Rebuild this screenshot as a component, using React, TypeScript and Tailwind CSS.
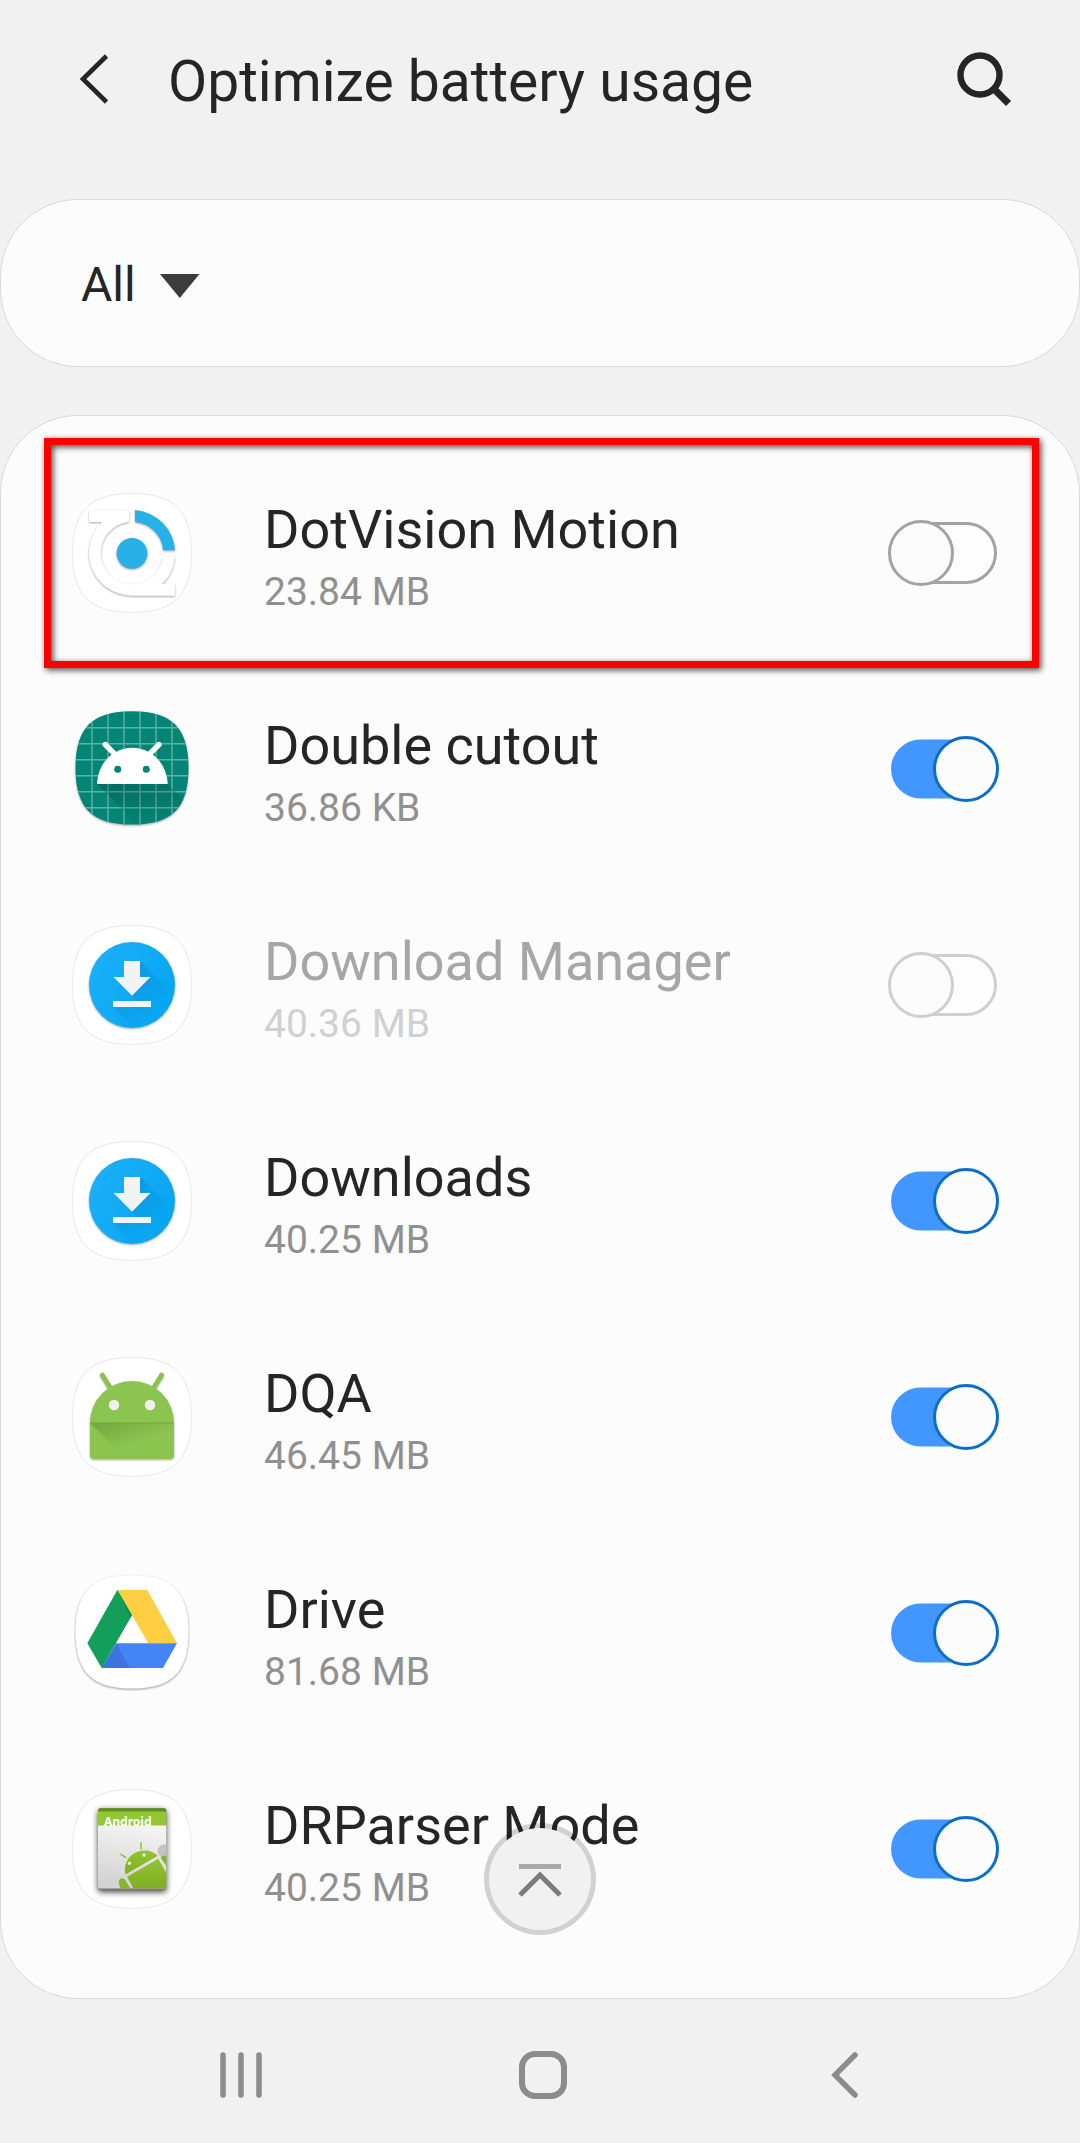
import { useState } from "react";
import type { ReactNode } from "react";

/* The launcher's squircle mask: hairline outline for legacy icons. */
function Plate({ children }: { children: ReactNode }) {
  return (
    <svg viewBox="0 0 120 120" className="size-[120px] flex-none" aria-hidden>
      <path
        d="M60 .5C102 .5 119.5 18 119.5 60S102 119.5 60 119.5 .5 102 .5 60 18 .5 60 .5Z"
        fill="#fff"
        stroke="#e9e9e9"
      />
      {children}
    </svg>
  );
}

const ADAPTIVE =
  "M60 2.3C100 2.3 116.5 19 116.5 59S100 115.6 60 115.6 3.5 99 3.5 59 20 2.3 60 2.3Z";

function DotVisionIcon() {
  return (
    <Plate>
      <g className="[filter:drop-shadow(0_1px_1px_rgba(0,0,0,0.35))]">
        <path
          d="M17 17.3H57V28.9A31.3 31.3 0 1 0 91.2 63.7H103A43 43 0 0 1 90 91H103V102.7H60A43 43 0 0 1 30 28.9H17Z"
          fill="#fff"
        />
        <path d="M63 17.1A43 43 0 0 1 103 57.3H91.2A31.3 31.3 0 0 0 63 28.9Z" fill="#27b1e6" />
        <circle cx="60" cy="60.3" r="15.4" fill="#27b1e6" />
      </g>
    </Plate>
  );
}

function CutoutIcon() {
  return (
    <svg viewBox="0 0 120 120" className="size-[120px] flex-none" aria-hidden>
      <defs>
        <clipPath id="cutout-mask">
          <path d={ADAPTIVE} />
        </clipPath>
        <linearGradient id="cutout-shade" x1="0.1" y1="0" x2="0.5" y2="1">
          <stop offset="0" stopColor="#00352c" stopOpacity="0.28" />
          <stop offset="1" stopColor="#00352c" stopOpacity="0" />
        </linearGradient>
      </defs>
      <path
        d={ADAPTIVE}
        fill="#028575"
        className="[filter:drop-shadow(0_1px_1px_rgba(0,0,0,0.35))]"
      />
      <g clipPath="url(#cutout-mask)">
        <path
          d="M20 0V120M36 0V120M52 0V120M68 0V120M84 0V120M100 0V120M0 18.7H120M0 34.7H120M0 50.7H120M0 66.7H120M0 82.7H120M0 98.7H120"
          stroke="#5fb2a7"
          strokeWidth="1.4"
        />
        <path d="M25 75H95.7L120 98V120H70Z" fill="url(#cutout-shade)" />
      </g>
      <path
        d="M33.3 35.6L43 45.4M86.9 35.6L77.2 45.4"
        stroke="#fff"
        strokeWidth="5.6"
        strokeLinecap="round"
      />
      <path d="M25 75C26 54 41 38.7 60.2 38.7S94.6 54 95.7 75Z" fill="#fff" />
      <circle cx="45.7" cy="60.3" r="3.5" fill="#028575" />
      <circle cx="74.3" cy="60.3" r="3.5" fill="#028575" />
    </svg>
  );
}

function DownloadIcon({ id }: { id: string }) {
  const disc = `${id}-disc`;
  const shade = `${id}-shade`;
  const clip = `${id}-clip`;
  return (
    <Plate>
      <defs>
        <linearGradient id={disc} x1="0" y1="0" x2="1" y2="0.6">
          <stop offset="0" stopColor="#1eb0f8" />
          <stop offset="1" stopColor="#06a6f3" />
        </linearGradient>
        <linearGradient id={shade} x1="0.2" y1="0.2" x2="0.7" y2="0.7">
          <stop offset="0" stopColor="#02629b" stopOpacity="0.26" />
          <stop offset="1" stopColor="#02629b" stopOpacity="0" />
        </linearGradient>
        <clipPath id={clip}>
          <circle cx="60" cy="60" r="43" />
        </clipPath>
      </defs>
      <circle
        cx="60"
        cy="60"
        r="43"
        fill={`url(#${disc})`}
        className="[filter:drop-shadow(0_1px_1px_rgba(0,0,0,0.35))]"
      />
      <g clipPath={`url(#${clip})`}>
        <path d="M68 36L108 76L85 98L60 70.7L68 52ZM41 82H79L98 101H60Z" fill={`url(#${shade})`} />
      </g>
      <path d="M52 36H68V52H78.5L60 70.7L41.5 52H52ZM41 76H79V82H41Z" fill="#f1f3f4" />
    </Plate>
  );
}

function DqaIcon() {
  return (
    <Plate>
      <defs>
        <linearGradient id="dqa-shade" x1="0" y1="0" x2="0.5" y2="0.6">
          <stop offset="0" stopColor="#3f6f1c" stopOpacity="0.35" />
          <stop offset="1" stopColor="#3f6f1c" stopOpacity="0" />
        </linearGradient>
      </defs>
      <g className="[filter:drop-shadow(0_1px_1px_rgba(0,0,0,0.35))]">
        <path
          d="M30.3 18L39 32M89.7 18L81 32"
          stroke="#8bc34a"
          strokeWidth="4.6"
          strokeLinecap="round"
        />
        <path
          d="M18 66A42 42 0 0 1 102 66V98Q102 102 98 102H22Q18 102 18 98Z"
          fill="#8cc450"
        />
      </g>
      <path d="M18 66H102L96 102H54Z" fill="url(#dqa-shade)" />
      <path d="M18 66H102" stroke="#74a83c" />
      <circle cx="42" cy="48" r="5.2" fill="#f1f1f1" />
      <circle cx="78" cy="48" r="5.2" fill="#f1f1f1" />
    </Plate>
  );
}

function DriveIcon() {
  return (
    <svg viewBox="0 0 120 120" className="size-[120px] flex-none" aria-hidden>
      <path
        d={ADAPTIVE}
        fill="#fff"
        className="[filter:drop-shadow(0_1px_1px_rgba(0,0,0,0.4))]"
      />
      <path d="M45.3 17H75.3L105 70.3H76.3Z" fill="#ffcf43" />
      <path d="M44.3 70.3H105L91 95H29.7Z" fill="#4385f5" />
      <path d="M44.3 70.3L58 95H29.7Z" fill="#3c75e2" />
      <path d="M45.3 17L60 42.3L29.7 95L15.3 70.3Z" fill="#119f5a" />
      <path d="M45.3 17L60 42.3L58.5 45Z" fill="#0e8f50" />
    </svg>
  );
}

function DrParserIcon() {
  return (
    <Plate>
      <defs>
        <linearGradient id="parser-page" x1="0.6" y1="0" x2="0.4" y2="1">
          <stop offset="0" stopColor="#f4f4f4" />
          <stop offset="1" stopColor="#d2d2d2" />
        </linearGradient>
        <linearGradient id="parser-bot" x1="0" y1="0" x2="0" y2="1">
          <stop offset="0" stopColor="#93c52f" />
          <stop offset="1" stopColor="#80ad26" />
        </linearGradient>
        <clipPath id="parser-clip">
          <rect x="26" y="19.3" width="68.3" height="81.2" rx="2.5" />
        </clipPath>
      </defs>
      <rect
        x="26"
        y="19.3"
        width="68.3"
        height="81.7"
        rx="2.5"
        fill="#777"
        className="[filter:drop-shadow(0_2px_3px_rgba(0,0,0,0.75))]"
      />
      <g clipPath="url(#parser-clip)">
        <path d="M26 36H95V99.5H26Z" fill="url(#parser-page)" />
        <path d="M26 19H95V23H26Z" fill="#5f8f1c" />
        <path d="M26 22.5H95V36.5H26Z" fill="#93c832" />
        <text
          x="32"
          y="37"
          fill="#fff"
          className="font-['Noto_Sans',sans-serif] text-[12px] font-bold"
        >
          Android
        </text>
        <circle cx="92" cy="62" r="6.5" fill="#c2c2c2" />
        <path
          d="M69 53.7V60M49 65.3L53.5 68.3"
          stroke="#8fbf2e"
          strokeWidth="1.5"
          strokeLinecap="round"
        />
        <path d="M53.4 85.5A19.5 19.5 0 0 1 85.8 66.8Z" fill="url(#parser-bot)" />
        <circle cx="57.5" cy="74.3" r="1.7" fill="#f0f5e2" />
        <circle cx="72" cy="66" r="1.7" fill="#f0f5e2" />
        <path d="M55 87.800L86.3 69.7L95 85V99.5H61.5Z" fill="url(#parser-bot)" />
        <path d="M88.5 68.5Q92 65 95 68V78Z" fill="#86b52a" />
        <path d="M46.5 93Q48 87.5 52.5 90L58.5 99.5H48.5Z" fill="#86b52a" />
      </g>
    </Plate>
  );
}

function Switch({
  id,
  checked,
  disabled,
  onChange,
}: {
  id: string;
  checked: boolean;
  disabled?: boolean;
  onChange: (on: boolean) => void;
}) {
  return (
    <span className="relative h-[68px] w-28 flex-none">
      <input
        id={id}
        type="checkbox"
        role="switch"
        checked={checked}
        disabled={disabled}
        onChange={(e) => onChange(e.target.checked)}
        className="absolute inset-0 size-full cursor-pointer appearance-none rounded-full disabled:cursor-default"
      />
      <svg
        viewBox="0 0 112 68"
        className={`pointer-events-none absolute inset-0 size-full ${disabled ? "text-[#cfcfcf]" : "text-[#a3a3a3]"}`}
        aria-hidden
      >
        {checked ? (
          <>
            <rect x="3" y="4.5" width="106" height="59" rx="29.5" fill="#4297ff" />
            <circle cx="78" cy="34" r="31.5" fill="#fcfcfc" stroke="#0a6fc8" strokeWidth="3" />
          </>
        ) : (
          <>
            <rect
              x="4"
              y="4.5"
              width="103.5"
              height="59"
              rx="29.5"
              fill="#fdfdfd"
              stroke="currentColor"
              strokeWidth="3"
            />
            <circle cx="33" cy="34" r="31.5" fill="#fcfcfc" stroke="currentColor" strokeWidth="3" />
          </>
        )}
      </svg>
    </span>
  );
}

type AppRow = {
  id: string;
  name: string;
  size: string;
  icon: ReactNode;
  on: boolean;
  disabled?: boolean;
  highlighted?: boolean;
};

const apps: AppRow[] = [
  {
    id: "dotvision",
    name: "DotVision Motion",
    size: "23.84 MB",
    icon: <DotVisionIcon />,
    on: false,
    highlighted: true,
  },
  { id: "cutout", name: "Double cutout", size: "36.86 KB", icon: <CutoutIcon />, on: true },
  {
    id: "download-manager",
    name: "Download Manager",
    size: "40.36 MB",
    icon: <DownloadIcon id="dm" />,
    on: false,
    disabled: true,
  },
  {
    id: "downloads",
    name: "Downloads",
    size: "40.25 MB",
    icon: <DownloadIcon id="dl" />,
    on: true,
  },
  { id: "dqa", name: "DQA", size: "46.45 MB", icon: <DqaIcon />, on: true },
  { id: "drive", name: "Drive", size: "81.68 MB", icon: <DriveIcon />, on: true },
  { id: "drparser", name: "DRParser Mode", size: "40.25 MB", icon: <DrParserIcon />, on: true },
];

export default function App() {
  const [enabled, setEnabled] = useState<Record<string, boolean>>(
    Object.fromEntries(apps.map((a) => [a.id, a.on])),
  );

  return (
    <div className="flex min-h-screen flex-col bg-[#f1f1f1] font-[Roboto,sans-serif] text-[#252525]">
      <header className="flex h-[160px] items-center pr-[67px] pl-[76px]">
        <button type="button" aria-label="Back" className="flex-none">
          <svg viewBox="0 0 36 60" className="h-[60px] w-9" fill="none">
            <path d="M30.5 6L7 29L30.5 52" stroke="currentColor" strokeWidth="4.6" />
          </svg>
        </button>
        <h1 className="ml-14 flex-1 pt-[3px] text-[57px] leading-[72px]">
          Optimize battery usage
        </h1>
        <button type="button" aria-label="Search" className="flex-none">
          <svg viewBox="0 0 60 60" className="size-[60px]" fill="none">
            <circle cx="27" cy="25" r="19.5" stroke="currentColor" strokeWidth="6.4" />
            <path d="M40.5 38.5L55.5 53.5" stroke="currentColor" strokeWidth="7" />
          </svg>
        </button>
      </header>

      <section className="mt-[39px] flex h-[168px] items-center rounded-[78px] border border-[#d9d9d9] bg-[#fcfcfc] pt-1">
        <select
          aria-label="Filter apps"
          defaultValue="all"
          className="h-20 appearance-none bg-transparent pr-6 pl-20 text-[48px] [field-sizing:content]"
        >
          <option value="all">All</option>
          <option value="not-optimized">Apps not optimized</option>
        </select>
        <svg viewBox="0 0 40 26" className="pointer-events-none h-[26px] w-10" aria-hidden>
          <path d="M0 2H39.5L19.8 26Z" fill="#3c3c3c" />
        </svg>
      </section>

      <main className="relative mt-12 rounded-[78px] border border-[#d9d9d9] bg-[#fcfcfc] pt-[29px] pb-[41px]">
        <ul>
          {apps.map((app) => (
            <li key={app.id} className="relative flex h-[216px] items-center pr-[79px] pl-[71px]">
              {app.icon}
              <label
                htmlFor={app.id}
                className={`ml-[72px] min-w-0 flex-1 pt-1.5 ${app.disabled ? "text-[#a6a6a6]" : ""}`}
              >
                <span className="block text-[54px] leading-[72px]">{app.name}</span>
                <span
                  className={`block text-[39px] leading-[52px] ${app.disabled ? "text-[#d0d0d0]" : "text-[#909090]"}`}
                >
                  {app.size}
                </span>
              </label>
              <Switch
                id={app.id}
                checked={enabled[app.id]}
                disabled={app.disabled}
                onChange={(on) => setEnabled((prev) => ({ ...prev, [app.id]: on }))}
              />
              {app.highlighted && (
                <span className="pointer-events-none absolute -inset-y-[7px] right-10 left-[43px] border-[7px] border-[#ff0000] [filter:drop-shadow(2px_2px_3px_rgba(0,0,0,0.75))]" />
              )}
            </li>
          ))}
        </ul>

        {/* Floats over the list. The ring is see-through, the face is not. */}
        <button
          type="button"
          aria-label="Go to top"
          className="absolute bottom-[63px] left-1/2 grid size-28 -translate-x-1/2 place-items-center rounded-full border-[5px] border-black/17 bg-[#f1f1f1] bg-clip-padding"
        >
          <svg viewBox="0 0 48 40" className="h-10 w-12" fill="none">
            <path d="M3 7.5H45" stroke="#a9a9a9" strokeWidth="5" />
            <path d="M4 36L24 16L44 36" stroke="#7b7b7b" strokeWidth="5" />
          </svg>
        </button>
      </main>

      <nav className="grid h-36 grid-cols-3 items-center justify-items-center pt-2 pr-[84px] pl-[90px] text-[#8c8c8c]">
        <button type="button" aria-label="Recents">
          <svg viewBox="0 0 48 52" className="h-[52px] w-12" fill="none">
            <path
              d="M6 6V46M24 6V46M42 6V46"
              stroke="currentColor"
              strokeWidth="5.5"
              strokeLinecap="round"
            />
          </svg>
        </button>
        <button type="button" aria-label="Home">
          <svg viewBox="0 0 52 52" className="size-[52px]" fill="none">
            <rect x="5" y="5" width="42" height="42" rx="13" stroke="currentColor" strokeWidth="6" />
          </svg>
        </button>
        <button type="button" aria-label="Back">
          <svg viewBox="0 0 36 52" className="h-[52px] w-9" fill="none">
            <path
              d="M28 6L8 26L28 46"
              stroke="currentColor"
              strokeWidth="5.5"
              strokeLinecap="round"
            />
          </svg>
        </button>
      </nav>
    </div>
  );
}
